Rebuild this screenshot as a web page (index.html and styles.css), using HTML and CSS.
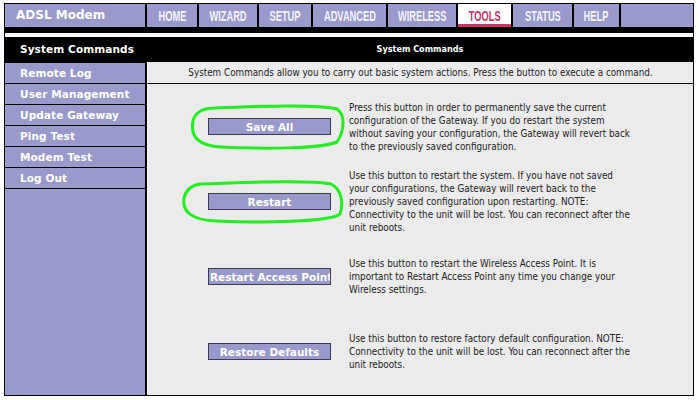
FILE: index.html
```html
<!DOCTYPE html>
<html lang="en">
<head>
    <meta charset="UTF-8">
    <title>ADSL Modem - System Commands</title>
    <link rel="stylesheet" href="styles.css">
</head>
<body>
    <div class="frame">
        <div class="topnav">
            <div class="brand">ADSL Modem</div>
            <a class="tab" href="#"><span>HOME</span></a>
            <a class="tab" href="#"><span>WIZARD</span></a>
            <a class="tab" href="#"><span>SETUP</span></a>
            <a class="tab" href="#"><span>ADVANCED</span></a>
            <a class="tab" href="#"><span>WIRELESS</span></a>
            <a class="tab active" href="#"><span>TOOLS</span></a>
            <a class="tab" href="#"><span>STATUS</span></a>
            <a class="tab" href="#"><span>HELP</span></a>
            <div class="tab"></div>
        </div>
        <div class="strip"></div>
        <div class="layout">
            <ul class="sidenav">
                <li class="active">System Commands</li>
                <li>Remote Log</li>
                <li>User Management</li>
                <li>Update Gateway</li>
                <li>Ping Test</li>
                <li>Modem Test</li>
                <li>Log Out</li>
                <li class="filler"></li>
            </ul>
            <div class="main">
                <div class="main-head">System Commands</div>
                <div class="intro">System Commands allow you to carry out basic system actions. Press the button to execute a command.</div>
                <div class="commands">
                    <div class="cmd">
                        <button class="btn">Save All</button>
                        <p>Press this button in order to permanently save the current<br>configuration of the Gateway. If you do restart the system<br>without saving your configuration, the Gateway will revert back<br>to the previously saved configuration.</p>
                    </div>
                    <div class="cmd">
                        <button class="btn">Restart</button>
                        <p>Use this button to restart the system. If you have not saved<br>your configurations, the Gateway will revert back to the<br>previously saved configuration upon restarting. NOTE:<br>Connectivity to the unit will be lost. You can reconnect after the<br>unit reboots.</p>
                    </div>
                    <div class="cmd">
                        <button class="btn">Restart Access Point</button>
                        <p>Use this button to restart the Wireless Access Point. It is<br>important to Restart Access Point any time you change your<br>Wireless settings.</p>
                    </div>
                    <div class="cmd">
                        <button class="btn">Restore Defaults</button>
                        <p>Use this button to restore factory default configuration. NOTE:<br>Connectivity to the unit will be lost. You can reconnect after the<br>unit reboots.</p>
                    </div>
                </div>
            </div>
        </div>
    </div>

    <!-- hand drawn highlight marks -->
    <svg class="marks" width="700" height="400" viewBox="0 0 700 400">
        <path d="M215 108 C260 106 318 104 337 109 C346 115 344 132 337 142 C320 149 262 149 221 147 C199 146 190 137 193 121 C195 112 204 108 215 108 Z"/>
        <path d="M201 184 C250 182 309 180 331 184 C343 190 343 205 340 214 C330 222 262 223 216 221 C192 220 182 212 184 198 C186 189 192 185 201 184 Z"/>
    </svg>
</body>
</html>
```

FILE: styles.css
```css
body {
    margin: 0;
    background-color: #fff;
    font-family: "DejaVu Sans", Verdana, sans-serif;
}
.frame {
    margin: 3px 0 0 4px;
    width: 688px;
    height: 391px;
    padding: 1px;
    background-color: #000;
    display: flex;
    flex-direction: column;
}
.topnav {
    display: grid;
    grid-template-columns: 140px 50px 58px 52px 73px 68px 53px 59px 45px 1fr;
    column-gap: 2px;
    height: 23px;
}
.brand {
    background-color: #9999cc;
    color: #fff;
    font-weight: bold;
    font-size: 12px;
    line-height: 23px;
    padding-left: 11px;
}
.tab {
    background-color: #9999cc;
    color: #f4f4ff;
    text-decoration: none;
    display: flex;
    align-items: center;
    justify-content: center;
    font-family: "Liberation Sans", Arial, sans-serif;
    font-weight: bold;
    font-size: 15px;
}
.tab span {
    display: inline-block;
    transform: scaleX(0.62);
    white-space: nowrap;
}
.tab.active {
    background-color: #fff;
    color: #cc3366;
    box-shadow: inset 0 -3px 0 #cc3366;
}
.strip {
    margin-top: 6px;
    height: 4px;
    background-color: #fff;
}
.layout {
    flex: 1;
    display: grid;
    grid-template-columns: 140px 1fr;
    column-gap: 2px;
}
.sidenav {
    list-style: none;
    margin: 0;
    padding: 0;
    display: flex;
    flex-direction: column;
    gap: 1px;
}
.sidenav li {
    background-color: #9999cc;
    color: #fff;
    font-weight: bold;
    font-size: 10.5px;
    letter-spacing: 0.1px;
    height: 20px;
    line-height: 20px;
    padding-left: 15px;
}
.sidenav li.active {
    background-color: #000;
    height: 25px;
    line-height: 25px;
}
.sidenav li.filler {
    flex: 1;
}
.main {
    display: flex;
    flex-direction: column;
}
.main-head {
    height: 25px;
    line-height: 25px;
    text-align: center;
    color: #fff;
    font-weight: bold;
    font-size: 9px;
    font-stretch: condensed;
}
.intro {
    height: 21px;
    line-height: 21px;
    background-color: #ebebeb;
    border-left: 1px solid #fafafa;
    border-bottom: 1px solid #000;
    text-align: center;
    color: #222;
    font-size: 9.8px;
    font-stretch: condensed;
}
.commands {
    flex: 1;
    background-color: #ebebeb;
    border-left: 1px solid #fafafa;
    padding-top: 5px;
}
.cmd {
    display: grid;
    grid-template-columns: 123px 1fr;
    column-gap: 18px;
    align-items: center;
    height: 75px;
    padding-left: 60px;
}
.cmd p {
    margin: 0;
    color: #222;
    font-size: 9.8px;
    font-stretch: condensed;
    line-height: 13px;
}
.btn {
    display: block;
    width: 123px;
    height: 17px;
    padding: 0 1px;
    background-color: #9999cc;
    border: 1px solid #3c3c50;
    color: #fff;
    font-family: "DejaVu Sans", Verdana, sans-serif;
    font-weight: bold;
    font-size: 10.5px;
    text-align: center;
    white-space: nowrap;
    overflow: hidden;
}
.marks {
    position: absolute;
    top: 0;
    left: 0;
    pointer-events: none;
}
.marks path {
    fill: none;
    stroke: #22ee22;
    stroke-width: 3;
    stroke-linejoin: round;
}
```
